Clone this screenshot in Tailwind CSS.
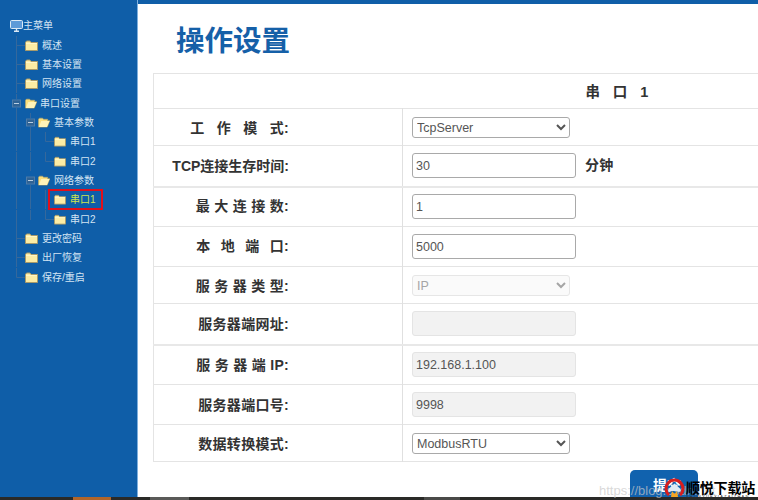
<!DOCTYPE html>
<html lang="zh-CN">
<head>
  <meta charset="UTF-8">
  <meta name="viewport" content="width=device-width, initial-scale=1.0">
  <title>操作设置</title>
  <script src="https://cdn.jsdelivr.net/npm/@tailwindcss/browser@4"></script>
</head>
<body class="h-screen w-screen overflow-hidden bg-white flex flex-col font-['Liberation_Sans','Noto_Sans_CJK_SC',sans-serif]">

  <svg class="hidden">
    <symbol id="folder" viewBox="0 0 13 11">
      <path d="M.5 2.5 L1.5 1 H5 L6 2.5 H12.5 V10.5 H.5 Z" fill="#fceca4" stroke="#a89a6a" stroke-width="1"/>
      <path d="M1 3.5 H12" stroke="#fff6c8" stroke-width="1"/>
    </symbol>
    <symbol id="folder-open" viewBox="0 0 13 11">
      <path d="M.5 2 L1.5 .8 H5 L6 2 H10.5 V3.5 H12.8 L10 10.5 H.5 Z" fill="#fcdf7c" stroke="#b3a468" stroke-width=".7"/>
      <path d="M3.5 4 H12.5 L9.6 10.4 H1 Z" fill="#fff3b8"/>
    </symbol>
  </svg>

  <div class="flex-1 flex min-h-0">
    <!-- menu tree -->
    <nav class="w-[138px] shrink-0 bg-[#0f5ea8] border-r border-[#7fb0de] pt-[16px] text-[10px] text-[#d3e4f3]">
      <div class="h-[19.36px] flex items-center pl-[10px]">
        <svg width="13" height="12" viewBox="0 0 13 12">
          <rect x=".5" y=".5" width="12" height="8" rx="1" fill="#5d9ad8" stroke="#dbe9f6"/>
          <path d="M6.5 9 V10.5 M4 11.3 H9" stroke="#dbe9f6" stroke-width="1.4"/>
        </svg>
        <span>主菜单</span>
      </div>

      <div class="h-[19.36px] flex items-center">
        <svg width="25" height="19" viewBox="0 0 25 19"><path d="M16.5 0 V19 M16.5 9.5 H25" stroke="#35689c" fill="none"/></svg>
        <svg width="13" height="11"><use href="#folder"/></svg>
        <span class="ml-[4px]">概述</span>
      </div>
      <div class="h-[19.36px] flex items-center">
        <svg width="25" height="19" viewBox="0 0 25 19"><path d="M16.5 0 V19 M16.5 9.5 H25" stroke="#35689c" fill="none"/></svg>
        <svg width="13" height="11"><use href="#folder"/></svg>
        <span class="ml-[4px]">基本设置</span>
      </div>
      <div class="h-[19.36px] flex items-center">
        <svg width="25" height="19" viewBox="0 0 25 19"><path d="M16.5 0 V19 M16.5 9.5 H25" stroke="#35689c" fill="none"/></svg>
        <svg width="13" height="11"><use href="#folder"/></svg>
        <span class="ml-[4px]">网络设置</span>
      </div>
      <div class="h-[19.36px] flex items-center">
        <svg width="25" height="19" viewBox="0 0 25 19"><path d="M16.5 0 V5 M16.5 14 V19" stroke="#35689c"/><rect x="12.5" y="6" width="8" height="7" fill="#2f6395" stroke="#4d7ba8"/><path d="M14 9.5 H19" stroke="#b9cfe3"/></svg>
        <svg width="12" height="11"><use href="#folder-open"/></svg>
        <span class="ml-[3px]">串口设置</span>
      </div>
      <div class="h-[19.36px] flex items-center">
        <svg width="38" height="19" viewBox="0 0 38 19"><path d="M16.5 0 V19 M30.5 0 V5 M30.5 14 V19" stroke="#35689c"/><rect x="26.5" y="6" width="8" height="7" fill="#2f6395" stroke="#4d7ba8"/><path d="M28 9.5 H33" stroke="#b9cfe3"/></svg>
        <svg width="12" height="11"><use href="#folder-open"/></svg>
        <span class="ml-[4px]">基本参数</span>
      </div>
      <div class="h-[19.36px] flex items-center">
        <svg width="54" height="19" viewBox="0 0 54 19"><path d="M16.5 0 V19 M30.5 0 V19 M45.5 0 V9.5 H54" stroke="#35689c" fill="none"/></svg>
        <svg width="12" height="11"><use href="#folder"/></svg>
        <span class="ml-[4px]">串口1</span>
      </div>
      <div class="h-[19.36px] flex items-center">
        <svg width="54" height="19" viewBox="0 0 54 19"><path d="M16.5 0 V19 M30.5 0 V19 M45.5 0 V9.5 H54" stroke="#35689c" fill="none"/></svg>
        <svg width="12" height="11"><use href="#folder"/></svg>
        <span class="ml-[4px]">串口2</span>
      </div>
      <div class="h-[19.36px] flex items-center">
        <svg width="38" height="19" viewBox="0 0 38 19"><path d="M16.5 0 V19 M30.5 14 V19" stroke="#35689c"/><rect x="26.5" y="6" width="8" height="7" fill="#2f6395" stroke="#4d7ba8"/><path d="M28 9.5 H33" stroke="#b9cfe3"/></svg>
        <svg width="12" height="11"><use href="#folder-open"/></svg>
        <span class="ml-[4px]">网络参数</span>
      </div>
      <div class="relative h-[19.36px] flex items-center">
        <svg width="54" height="19" viewBox="0 0 54 19"><path d="M16.5 0 V19 M30.5 0 V19 M45.5 0 V19" stroke="#35689c" fill="none"/></svg>
        <svg width="12" height="11"><use href="#folder"/></svg>
        <span class="ml-[4px] text-[#cfe34f]">串口1</span>
        <span class="absolute left-[48px] top-[-1px] w-[55px] h-[21px] border-2 border-[#e0101c]"></span>
      </div>
      <div class="h-[19.36px] flex items-center">
        <svg width="54" height="19" viewBox="0 0 54 19"><path d="M16.5 0 V19 M30.5 0 V10 M45.5 0 V9.5 H54" stroke="#35689c" fill="none"/></svg>
        <svg width="12" height="11"><use href="#folder"/></svg>
        <span class="ml-[4px]">串口2</span>
      </div>
      <div class="h-[19.36px] flex items-center">
        <svg width="25" height="19" viewBox="0 0 25 19"><path d="M16.5 0 V19 M16.5 9.5 H25" stroke="#35689c" fill="none"/></svg>
        <svg width="13" height="11"><use href="#folder"/></svg>
        <span class="ml-[4px]">更改密码</span>
      </div>
      <div class="h-[19.36px] flex items-center">
        <svg width="25" height="19" viewBox="0 0 25 19"><path d="M16.5 0 V19 M16.5 9.5 H25" stroke="#35689c" fill="none"/></svg>
        <svg width="13" height="11"><use href="#folder"/></svg>
        <span class="ml-[4px]">出厂恢复</span>
      </div>
      <div class="h-[19.36px] flex items-center">
        <svg width="25" height="19" viewBox="0 0 25 19"><path d="M16.5 0 V9.5 H25" stroke="#35689c" fill="none"/></svg>
        <svg width="13" height="11"><use href="#folder"/></svg>
        <span class="ml-[4px]">保存/重启</span>
      </div>
    </nav>

    <!-- settings panel -->
    <main class="flex-1 min-w-0 border-t-4 border-[#0f5ea8] pl-[15px] overflow-hidden">
      <h1 class="h-[69px] pl-[23px] pt-[1px] flex items-center text-[28.5px] font-bold text-[#1560a8] font-['Noto_Sans_CJK_SC',sans-serif]">操作设置</h1>

      <table class="table-fixed w-[928px] border border-[#e4e4e4] text-[14px] font-bold text-[#333] tracking-[.3px]">
        <colgroup><col class="w-[249px]"><col></colgroup>
        <tbody>
          <tr class="h-[35px] border-b border-[#e4e4e4]"><td colspan="2" class="pt-[3px] text-center text-[14.5px] tracking-[.2px]">串&nbsp;&nbsp;&nbsp;口&nbsp;&nbsp;&nbsp;1</td></tr>
          <tr class="h-[37px] border-b border-[#e4e4e4]">
            <td class="pt-[2px] text-right pr-[113px] border-r border-[#e0e0e0] [word-spacing:8px]">工 作 模 式:</td>
            <td class="pl-[9px] pt-[1px]">
              <select class="block w-[158px] h-[21px] bg-white border border-[#a9a9a9] rounded-[3px] text-[12.5px] font-normal tracking-normal text-[#555]"><option>TcpServer</option></select>
            </td>
          </tr>
          <tr class="h-[41px] border-b-2 border-[#e8e8e8]">
            <td class="pt-[2px] text-right pr-[113px] border-r border-[#e0e0e0] tracking-normal">TCP连接生存时间:</td>
            <td class="pl-[9px]">
              <div class="flex items-center gap-[9px]">
                <input value="30" class="w-[164px] h-[25px] px-[3px] border border-[#a9a9a9] rounded-[3px] text-[12.5px] font-normal tracking-normal text-[#555]">
                <span>分钟</span>
              </div>
            </td>
          </tr>
          <tr class="h-[40px] border-b border-[#e4e4e4]">
            <td class="text-right pr-[113px] border-r border-[#e0e0e0]">最 大 连 接 数:</td>
            <td class="pl-[9px]"><input value="1" class="block w-[164px] h-[25px] px-[3px] border border-[#a9a9a9] rounded-[3px] text-[12.5px] font-normal tracking-normal text-[#555]"></td>
          </tr>
          <tr class="h-[40px] border-b border-[#e4e4e4]">
            <td class="text-right pr-[113px] border-r border-[#e0e0e0] [word-spacing:6px]">本 地 端 口:</td>
            <td class="pl-[9px]"><input value="5000" class="block w-[164px] h-[25px] px-[3px] border border-[#a9a9a9] rounded-[3px] text-[12.5px] font-normal tracking-normal text-[#555]"></td>
          </tr>
          <tr class="h-[37px] border-b border-[#e4e4e4]">
            <td class="pt-[2px] text-right pr-[113px] border-r border-[#e0e0e0]">服 务 器 类 型:</td>
            <td class="pl-[9px] pt-[1px]">
              <select disabled class="block w-[158px] h-[21px] bg-[#fafafa] border border-[#e6e6e6] rounded-[3px] text-[12.5px] font-normal tracking-normal text-[#a5a5a5]"><option>IP</option></select>
            </td>
          </tr>
          <tr class="h-[41px] border-b-2 border-[#e8e8e8]">
            <td class="pt-[2px] text-right pr-[113px] border-r border-[#e0e0e0]">服务器端网址:</td>
            <td class="pl-[9px]"><input disabled class="block w-[164px] h-[25px] px-[3px] bg-[#f2f2f2] border border-[#e4e4e4] rounded-[3px] text-[12.5px] font-normal tracking-normal text-[#555]"></td>
          </tr>
          <tr class="h-[40px] border-b border-[#e4e4e4]">
            <td class="pt-[2px] text-right pr-[113px] border-r border-[#e0e0e0]">服 务 器 端 IP:</td>
            <td class="pl-[9px]"><input disabled value="192.168.1.100" class="block w-[164px] h-[25px] px-[3px] bg-[#f2f2f2] border border-[#e4e4e4] rounded-[3px] text-[12.5px] font-normal tracking-normal text-[#555]"></td>
          </tr>
          <tr class="h-[40px] border-b border-[#e4e4e4]">
            <td class="pt-[2px] text-right pr-[113px] border-r border-[#e0e0e0]">服务器端口号:</td>
            <td class="pl-[9px]"><input disabled value="9998" class="block w-[164px] h-[25px] px-[3px] bg-[#f2f2f2] border border-[#e4e4e4] rounded-[3px] text-[12.5px] font-normal tracking-normal text-[#555]"></td>
          </tr>
          <tr class="h-[37px] border-b border-[#e4e4e4]">
            <td class="pt-[2px] text-right pr-[113px] border-r border-[#e0e0e0]">数据转换模式:</td>
            <td class="pl-[9px] pt-[1px]">
              <select class="block w-[158px] h-[21px] bg-white border border-[#a9a9a9] rounded-[3px] text-[12.5px] font-normal tracking-normal text-[#555]"><option>ModbusRTU</option></select>
            </td>
          </tr>
        </tbody>
      </table>

      <div class="pl-[477px] pt-[8px]">
        <button class="w-[68px] h-[30px] pl-[6px] bg-[#1162ae] rounded-t-[5px] text-[14px] font-bold text-white">提交</button>
      </div>
    </main>
  </div>

  <!-- taskbar strip -->
  <div class="h-[3px] shrink-0 flex bg-[#2a2a28]">
    <div class="w-[73px]"></div>
    <div class="w-[38px] bg-[#b0652a]"></div>
    <div class="w-[39px]"></div>
    <div class="w-[39px] bg-[#5a5a58]"></div>
    <div class="w-[235px]"></div>
    <div class="w-[36px] bg-[#4a4a48]"></div>
  </div>

  <!-- watermark over the corner -->
  <span class="absolute left-[599px] top-[481px] text-[13px] text-[#c8c8c8]/70">https://blog.csdn.net</span>
  <div class="absolute left-[664px] top-[478px] flex items-start">
    <svg width="21" height="21" viewBox="0 0 21 21">
      <path d="M5 17 A8.5 8.5 0 1 1 16 17" fill="none" stroke="#d81e1e" stroke-width="3"/>
      <path d="M4.5 11 L10.5 5.5 L16.5 11 V13 H4.5 Z" fill="#dfeaf5"/>
      <path d="M7 19 L8 13 L10.5 16 L13 13 L14 19 Z" fill="#f5a623"/>
    </svg>
    <div class="ml-[1px] pt-[2px] flex flex-col">
      <span class="text-[14px] leading-[15px] font-bold tracking-[-.2px] text-black font-['Noto_Sans_CJK_SC',sans-serif]">顺悦下载站</span>
      <span class="text-[4px] leading-[4px] tracking-[1.2px] text-[#333]">SHUNYUEXIAZAIZHAN</span>
    </div>
  </div>
</body>
</html>
